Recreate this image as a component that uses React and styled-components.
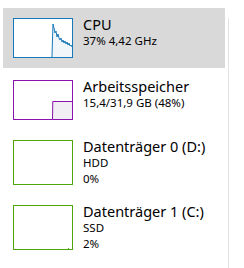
import React from "react";
import styled, { createGlobalStyle } from "styled-components";

const GlobalStyle = createGlobalStyle`
  body {
    margin: 0;
    background: #ffffff;
    font-family: "Segoe UI", "Noto Sans", "Liberation Sans", sans-serif;
    color: #000000;
  }
`;

const items = [
  {
    key: "cpu",
    title: "CPU",
    lines: ["37% 4,42 GHz"],
    color: "#1779ba",
    fill: "#f1f6fa",
    height: 40,
    selected: true,
  },
  {
    key: "mem",
    title: "Arbeitsspeicher",
    lines: ["15,4/31,9 GB (48%)"],
    color: "#8b12ae",
    fill: "#f1eff3",
    height: 40,
  },
  {
    key: "d0",
    title: "Datenträger 0 (D:)",
    lines: ["HDD", "0%"],
    color: "#4da60c",
    height: 45,
  },
  {
    key: "d1",
    title: "Datenträger 1 (C:)",
    lines: ["SSD", "2%"],
    color: "#4da60c",
    height: 45,
    tick: true,
  },
];

function Graph({ item }) {
  const w = 58;
  const h = item.height - 2;
  if (item.key === "cpu") {
    const pts = [
      [38, 38], [38.5, 20], [39, 5], [40, 9], [41, 14], [42, 12], [43, 18],
      [44, 15], [45, 19], [46, 21], [47, 19], [48, 23], [49, 21], [50, 24],
      [51, 22], [52, 25], [53, 23], [54, 26], [55, 24], [56, 27], [57, 26], [58, 28],
    ];
    const line = pts.map((p) => p.join(",")).join(" ");
    const area = `${line} 58,38 38,38`;
    return (
      <svg width={w} height={h} viewBox={`0 0 ${w} ${h}`}>
        <polygon points={area} fill={item.fill} />
        <polyline points={line} fill="none" stroke={item.color} strokeWidth="1" />
      </svg>
    );
  }
  if (item.key === "mem") {
    return (
      <svg width={w} height={h} viewBox={`0 0 ${w} ${h}`}>
        <rect x="38" y="20" width="20" height="18" fill={item.fill} />
        <path d="M38.5 38 L38.8 20.5 L58 20.5" fill="none" stroke={item.color} strokeWidth="1" />
      </svg>
    );
  }
  return (
    <svg width={w} height={h} viewBox={`0 0 ${w} ${h}`}>
      {item.tick && <rect x="54" y={h - 1} width="1" height="1" fill={item.color} />}
    </svg>
  );
}

export default function App() {
  return (
    <>
      <GlobalStyle />
      <Page>
        <List>
          {items.map((item) => (
            <Row key={item.key} selected={item.selected} rowHeight={item.height + 20}>
              <Thumb color={item.color} boxHeight={item.height}>
                <Graph item={item} />
              </Thumb>
              <Info>
                <Title>{item.title}</Title>
                {item.lines.map((l) => (
                  <Detail key={l}>{l}</Detail>
                ))}
              </Info>
            </Row>
          ))}
        </List>
        <Divider />
      </Page>
    </>
  );
}

const Page = styled.div`
  display: flex;
  width: 244px;
  height: 268px;
  overflow: hidden;
`;

const List = styled.div`
  display: flex;
  flex-direction: column;
  width: 222px;
  padding: 8px 0 0 3px;
`;

const Row = styled.div`
  display: flex;
  align-items: flex-start;
  box-sizing: border-box;
  height: ${(p) => p.rowHeight}px;
  padding: 10px 10px;
  background: ${(p) => (p.selected ? "#d9d9d9" : "transparent")};
  margin-bottom: ${(p) => (p.selected ? "2px" : "0")};
`;

const Thumb = styled.div`
  width: 58px;
  height: ${(p) => p.boxHeight - 2}px;
  border: 1px solid ${(p) => p.color};
  background: #ffffff;
  flex-shrink: 0;
  display: flex;
  svg {
    display: block;
  }
`;

const Info = styled.div`
  display: flex;
  flex-direction: column;
  margin-left: 10px;
  margin-top: -2px;
`;

const Title = styled.div`
  font-size: 14.5px;
  line-height: 17px;
  white-space: nowrap;
`;

const Detail = styled.div`
  font-size: 11.5px;
  line-height: 16px;
  white-space: nowrap;
`;

const Divider = styled.div`
  width: 1px;
  margin: 18px 0 0 3px;
  background: #e3e3e3;
`;
